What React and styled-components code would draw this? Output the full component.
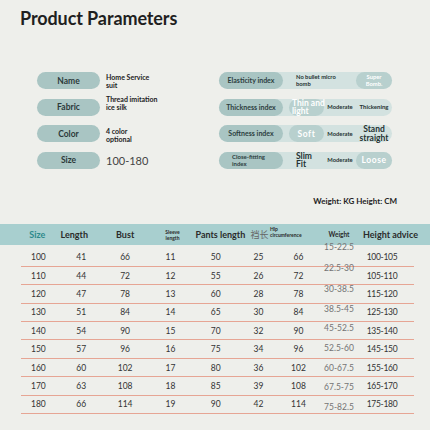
import React from "react";
import styled, { createGlobalStyle } from "styled-components";

const Global = createGlobalStyle`
  body {
    margin: 0;
    background: #eeefeb;
  }
`;

const Page = styled.div`
  width: 430px;
  height: 430px;
  overflow: hidden;
  background: #eeefeb;
  font-family: Lato, "Liberation Sans", sans-serif;
  color: #2b2b2b;
`;

const Title = styled.h1`
  margin: 0;
  padding: 7px 0 0 20px;
  font-size: 18px;
  line-height: 22px;
  font-weight: 700;
  letter-spacing: -0.1px;
  color: #1f1f1f;
`;

const Params = styled.div`
  display: flex;
  margin-top: 43px;
  padding-left: 37px;
`;

const SpecList = styled.div`
  width: 182px;
  display: grid;
  grid-template-columns: 63px 1fr;
  grid-auto-rows: 17px;
  row-gap: 9.67px;
  column-gap: 6px;
`;

const SpecPill = styled.div`
  border-radius: 9px;
  background: #a9c5c3;
  display: flex;
  align-items: center;
  justify-content: center;
  font-size: 8.5px;
  font-weight: 700;
  color: #2c3a3a;
`;

const SpecValue = styled.div`
  display: flex;
  flex-direction: column;
  justify-content: center;
  font-size: ${(p) => (p.$big ? "11px" : "7px")};
  font-weight: ${(p) => (p.$big ? 400 : 700)};
  line-height: ${(p) => (p.$big ? "17px" : "8px")};
  color: ${(p) => (p.$big ? "#444" : "#222")};
  transform: translateY(${(p) => p.$lift || 0}px);
`;

const IndexList = styled.div`
  width: 173px;
  display: grid;
  grid-auto-rows: 17px;
  row-gap: 9.67px;
`;

const Track = styled.div`
  display: flex;
  border-radius: 9px;
  background: #d3e2e0;
`;

const TrackLabel = styled.div`
  width: 64px;
  flex: none;
  border-radius: 9px;
  background: #a9c5c3;
  display: flex;
  flex-direction: column;
  justify-content: center;
  align-items: ${(p) => (p.$left ? "flex-start" : "center")};
  padding-left: ${(p) => (p.$left ? "13px" : "0")};
  box-sizing: border-box;
  font-size: ${(p) => (p.$left ? "6px" : "7px")};
  line-height: 7px;
  font-weight: 700;
  color: #2c3e3e;
`;

const Options = styled.div`
  flex: 1;
  display: grid;
  grid-template-columns: 35px 32px 36px;
  padding-left: 6px;
`;

const Option = styled.div`
  grid-column: ${(p) => (p.$span ? "span 2" : "auto")};
  display: flex;
  flex-direction: column;
  justify-content: center;
  align-items: ${(p) => (p.$align === "left" ? "flex-start" : "center")};
  padding-left: ${(p) => (p.$indent ?? (p.$align === "left" ? 7 : 0))}px;
  border-radius: 9px;
  background: ${(p) => (p.$active ? "#b8d0ce" : "transparent")};
  color: ${(p) => (p.$active ? "#fff" : "#253333")};
  font-weight: 700;
  white-space: nowrap;
  font-size: ${(p) => (p.$size === "big" ? "8.5px" : p.$size === "mid" ? "6px" : "5.8px")};
  line-height: ${(p) => (p.$size === "big" ? "8.5px" : "6.5px")};
  letter-spacing: ${(p) => (p.$spaced ? "0.6px" : "0")};
  text-align: ${(p) => (p.$align === "left" ? "left" : "center")};
`;

const Note = styled.div`
  margin-top: 27px;
  padding-right: 33px;
  text-align: right;
  font-size: 8px;
  line-height: 10px;
  font-weight: 700;
  color: #1e1e1e;
`;

const cols = "38.75px 43px 44.75px 46px 44.5px 41px 39px 42px 54px";

const Band = styled.div`
  margin-top: 18px;
  height: 21.5px;
  background: #a8cfcf;
`;

const HeadGrid = styled.div`
  margin-left: 21px;
  width: 393px;
  height: 100%;
  display: grid;
  grid-template-columns: ${cols};
  align-items: center;
`;

const Head = styled.div`
  text-align: ${(p) => (p.$left ? "left" : "center")};
  white-space: nowrap;
  font-weight: ${(p) => (p.$cjk ? 400 : 700)};
  font-family: ${(p) =>
    p.$cjk ? '"Noto Sans CJK SC", sans-serif' : 'Lato, "Liberation Sans", sans-serif'};
  font-size: ${(p) => (p.$tiny ? "5px" : p.$small ? "6.5px" : "9px")};
  line-height: ${(p) => (p.$tiny ? "6px" : "10px")};
  color: ${(p) => (p.$teal ? "#2f8a8c" : p.$cjk ? "#666" : "#2b2b2b")};
  transform: translate(${(p) => p.$dx || 0}px, ${(p) => p.$dy || 0}px);
`;

const Body = styled.div`
  margin-left: 21px;
  width: 393px;
  padding-top: 3px;
`;

const Row = styled.div`
  height: 18.4px;
  box-sizing: border-box;
  display: grid;
  grid-template-columns: ${cols};
  align-items: center;
  border-bottom: 1px solid #e6a594;
`;

const Cell = styled.div`
  text-align: center;
  font-size: 8.5px;
  color: ${(p) => (p.$soft ? "#747474" : "#333")};
  padding-right: ${(p) => p.$pr || 0}px;
  letter-spacing: ${(p) => (p.$tight ? "-0.3px" : "0")};
  transform: translateY(${(p) => p.$dy || 0}px);
`;

const specs = [
  { label: "Name", lines: ["Home Service", "suit"] },
  { label: "Fabric", lines: ["Thread imitation", "ice silk"], lift: -4 },
  { label: "Color", lines: ["4 color", "optional"], lift: 1 },
  { label: "Size", lines: ["100-180"], big: true },
];

const indexes = [
  {
    label: ["Elasticity index"],
    options: [
      { lines: ["No bullet micro", "bomb"], span: true, align: "left" },
      { lines: ["Super", "Bomb."], active: true },
    ],
  },
  {
    label: ["Thickness index"],
    options: [
      { lines: ["Thin and", "light"], active: true, size: "big", align: "left", indent: 3 },
      { lines: ["Moderate"] },
      { lines: ["Thickening"], size: "mid" },
    ],
  },
  {
    label: ["Softness index"],
    options: [
      { lines: ["Soft"], active: true, size: "big", spaced: true },
      { lines: ["Moderate"] },
      { lines: ["Stand", "straight"], size: "big" },
    ],
  },
  {
    label: ["Close-fitting", "index"],
    left: true,
    options: [
      { lines: ["Slim", "Fit"], size: "big", align: "left" },
      { lines: ["Moderate"] },
      { lines: ["Loose"], active: true, size: "big", spaced: true },
    ],
  },
];

const sizes = [
  [100, 41, 66, 11, 50, 25, 66, "15-22.5", "100-105"],
  [110, 44, 72, 12, 55, 26, 72, "22.5-30", "105-110"],
  [120, 47, 78, 13, 60, 28, 78, "30-38.5", "115-120"],
  [130, 51, 84, 14, 65, 30, 84, "38.5-45", "125-130"],
  [140, 54, 90, 15, 70, 32, 90, "45-52.5", "135-140"],
  [150, 57, 96, 16, 75, 34, 96, "52.5-60", "145-150"],
  [160, 60, 102, 17, 80, 36, 102, "60-67.5", "155-160"],
  [170, 63, 108, 18, 85, 39, 108, "67.5-75", "165-170"],
  [180, 66, 114, 19, 90, 42, 114, "75-82.5", "175-180"],
];

// the weight column drifts against the row lines in the original
const weightShift = [-10, -8, -5, -3, -3, -1, 0, 1, 3];

const lines = (arr) => arr.map((t, i) => <span key={i}>{t}</span>);

export default function App() {
  return (
    <Page>
      <Global />
      <Title>Product Parameters</Title>

      <Params>
        <SpecList>
          {specs.map((s) => (
            <React.Fragment key={s.label}>
              <SpecPill>{s.label}</SpecPill>
              <SpecValue $big={s.big} $lift={s.lift}>
                {lines(s.lines)}
              </SpecValue>
            </React.Fragment>
          ))}
        </SpecList>

        <IndexList>
          {indexes.map((row) => (
            <Track key={row.label[0]}>
              <TrackLabel $left={row.left}>{lines(row.label)}</TrackLabel>
              <Options>
                {row.options.map((o, i) => (
                  <Option
                    key={i}
                    $span={o.span}
                    $active={o.active}
                    $size={o.size}
                    $align={o.align}
                    $indent={o.indent}
                    $spaced={o.spaced}
                  >
                    {lines(o.lines)}
                  </Option>
                ))}
              </Options>
            </Track>
          ))}
        </IndexList>
      </Params>

      <Note>Weight: KG Height: CM</Note>

      <Band>
        <HeadGrid>
          <Head $teal $dx={-3}>Size</Head>
          <Head $dx={-7}>Length</Head>
          <Head>Bust</Head>
          <Head $tiny $dx={2}>
            Sleeve
            <br />
            length
          </Head>
          <Head $dx={2}>Pants length</Head>
          <Head $cjk $dx={1}>裆长</Head>
          <Head $tiny $left $dx={-9} $dy={-3}>
            Hip
            <br />
            circumference
          </Head>
          <Head $small>Weight</Head>
          <Head $dx={3}>Height advice</Head>
        </HeadGrid>
      </Band>

      <Body>
        {sizes.map((r, i) => (
          <Row key={r[0]}>
            <Cell $pr={4}>{r[0]}</Cell>
            <Cell>{r[1]}</Cell>
            <Cell>{r[2]}</Cell>
            <Cell>{r[3]}</Cell>
            <Cell>{r[4]}</Cell>
            <Cell>{r[5]}</Cell>
            <Cell>{r[6]}</Cell>
            <Cell $soft $dy={weightShift[i]}>{r[7]}</Cell>
            <Cell $pr={10} $tight>{r[8]}</Cell>
          </Row>
        ))}
      </Body>
    </Page>
  );
}
